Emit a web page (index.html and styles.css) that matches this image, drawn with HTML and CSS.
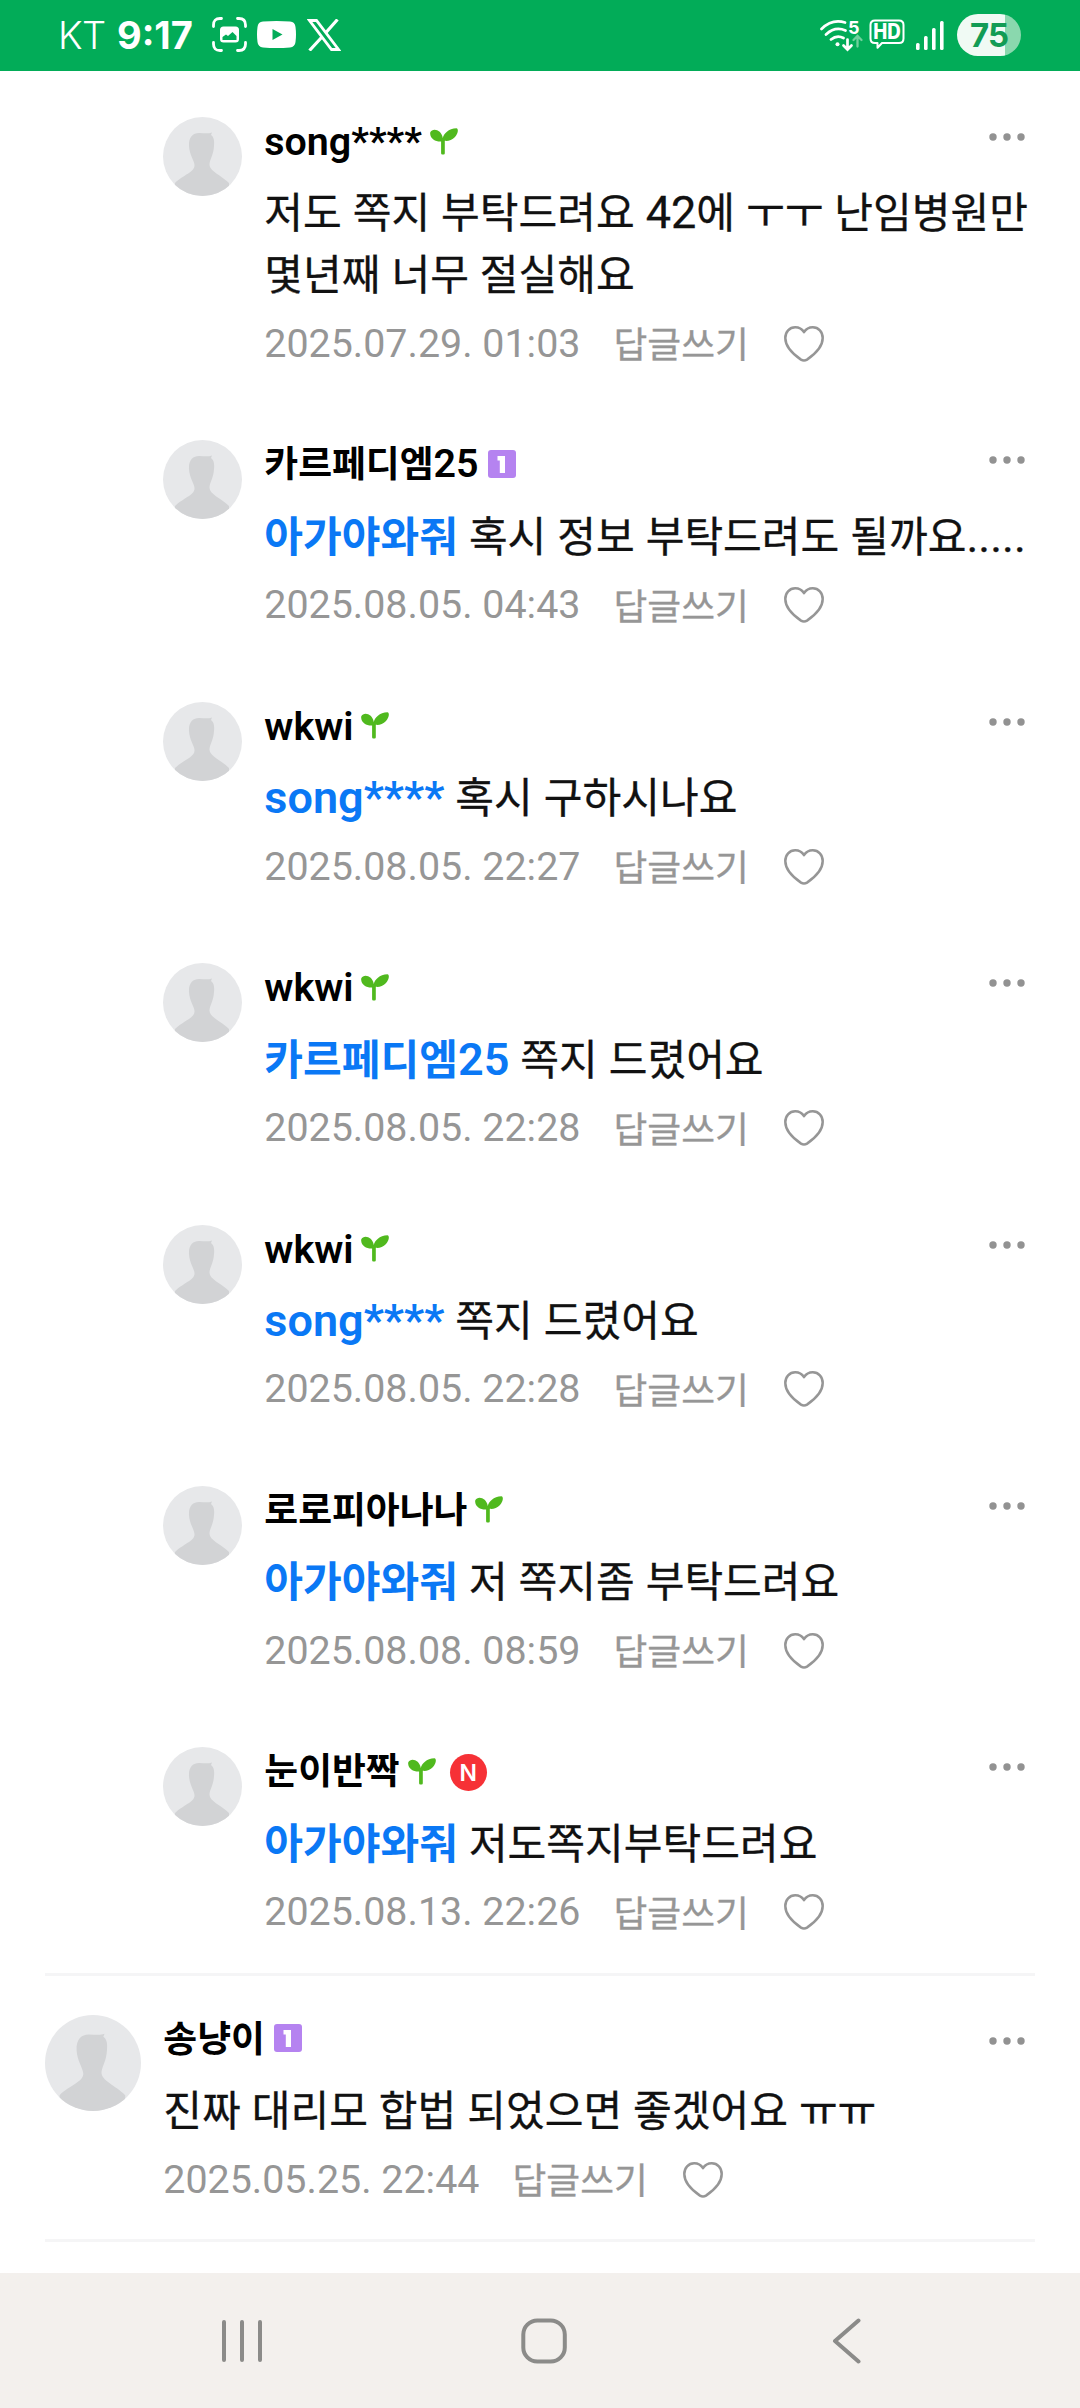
FILE: index.html
```html
<!DOCTYPE html>
<html lang="ko">
<head>
<meta charset="utf-8">
<title>댓글</title>
<link rel="stylesheet" href="styles.css">
</head>
<body>
<svg class="defs" width="0" height="0" aria-hidden="true">
  <symbol id="avatar" viewBox="0 0 79 79">
    <clipPath id="round"><circle cx="39.5" cy="39.5" r="39.5"/></clipPath>
    <circle cx="39.5" cy="39.5" r="39.5" fill="#e7e8ea"/>
    <path clip-path="url(#round)" fill="#d2d3d5" d="M26 29C25.500 20 30 16 36 16C41 16 45 17 49 15.500L48 18C51 20 51.500 24 51 29C50.500 38 47 42 46.500 47C46 54 58 58 66 66V79H12V66C20 58 32 55 31.500 48C31 43 26.500 38 26 29Z"/>
  </symbol>
  <symbol id="sprout" viewBox="0 0 28 27">
    <path fill="#50b91e" d="M.2 4.500C2.500-.5 11.500 1.500 12.800 10C13.500 6 18.500.5 26.500.3C28.500.5 28.500 5 25 9C22 12.500 17.500 13.300 14.800 12.800V25.300Q14.800 26.500 13.600 26.500H12.300Q11.100 26.500 11.100 25.300V13.500C6 14-.5 10.500.2 4.500Z"/>
  </symbol>
  <symbol id="level" viewBox="0 0 28 28">
    <rect width="28" height="28" rx="3" fill="#b583f0"/>
    <path fill="#fff" d="M9.500 6H17V23H11.800V10.500H9.500Z"/>
  </symbol>
  <symbol id="heart" viewBox="0 0 40 36">
    <path fill="none" stroke="#969696" stroke-width="2.500" stroke-linejoin="round" d="M20 6.200C17.800 2.600 14.500 1.300 11.200 1.300C5.500 1.300 1.300 5.800 1.300 12C1.300 21.500 9.500 28.500 17 33.600Q20 35.500 23 33.600C30.500 28.500 38.700 21.500 38.700 12C38.700 5.800 34.500 1.300 28.800 1.300C25.500 1.300 22.200 2.600 20 6.200Z"/>
  </symbol>
  <symbol id="more" viewBox="0 0 36 8">
    <g fill="#929292"><circle cx="4" cy="4" r="3.700"/><circle cx="18" cy="4" r="3.700"/><circle cx="32" cy="4" r="3.700"/></g>
  </symbol>
</svg>

<header class="status">
  <span class="carrier">KT</span>
  <span class="clock">9:17</span>
  <svg class="i-shot" width="35" height="35" viewBox="0 0 35 35" fill="none" stroke="#fff" stroke-width="2.800" stroke-linecap="round">
    <path d="M1.500 9.500V8Q1.500 1.500 8 1.500H9.500M25.500 1.500H27Q33.500 1.500 33.500 8V9.500M33.500 25.500V27Q33.500 33.500 27 33.500H25.500M9.500 33.500H8Q1.500 33.500 1.500 27V25.500"/>
    <rect x="8" y="9.500" width="19" height="16" rx="3.500" fill="#fff" stroke="none"/>
    <path d="M10.500 23V20L14 17.500L16 19L20.500 15L24.500 19V23Z" fill="#02ac58" stroke="none"/>
  </svg>
  <svg class="i-tube" width="39" height="27" viewBox="0 0 39 27">
    <path fill="#fff" d="M6 .6Q19.500-.6 33 .6Q38 1 38.500 6Q39.500 13.500 38.500 21Q38 26 33 26.400Q19.500 27.600 6 26.400Q1 26 .5 21Q-.5 13.500.5 6Q1 1 6 .6Z"/>
    <path fill="#02ac58" d="M15.500 8L25.500 13.500L15.500 19Z"/>
  </svg>
  <svg class="i-x" width="34" height="32" viewBox="0 0 34 32" fill="none" stroke="#fff">
    <path stroke-width="2.800" d="M2.500 1.500H9.500L31.500 30.500H24.500Z"/>
    <path stroke-width="3.200" d="M30.500.5L19 13.500M14.500 18.500L2.500 31.500"/>
  </svg>
  <span class="spacer"></span>
  <svg class="i-wifi" width="44" height="34" viewBox="0 0 44 34" fill="none" stroke="#fff" stroke-width="2.700" stroke-linecap="round">
    <path d="M1.500 11Q12 .5 25 4.500M6 16.500Q15 8 25.500 12.500M11 21.500Q17 16.500 23.500 20"/>
    <circle cx="17.500" cy="26.300" r="2" fill="#fff" stroke="none"/>
    <path d="M27.500 21.500V31M23.500 27.500L27.500 31.500L31.500 27.500"/>
    <path stroke="#70d09c" stroke-width="2.300" d="M37.500 28.500V18.500M33.500 22L37.500 18L41.500 22"/>
    <text class="wifi-gen" x="28" y="15.500">5</text>
  </svg>
  <svg class="i-hd" width="36" height="31" viewBox="0 0 36 31" fill="none" stroke="#fff" stroke-width="2">
    <path stroke-linejoin="round" d="M6 1.500H30Q34.500 1.500 34.500 6V19.500Q34.500 24 30 24H13L8.500 28.800V24H6Q1.500 24 1.500 19.500V6Q1.500 1.500 6 1.500Z"/>
    <text class="hd-text" x="4.300" y="20" textLength="27.500" lengthAdjust="spacingAndGlyphs">HD</text>
  </svg>
  <svg class="i-signal" width="28" height="30" viewBox="0 0 28 30" fill="#fff">
    <rect x="0" y="23" width="3.600" height="7" rx="1.500"/><rect x="8" y="16" width="3.600" height="14" rx="1.500"/><rect x="16" y="8" width="3.600" height="22" rx="1.500"/><rect x="24" y="1" width="3.600" height="29" rx="1.500"/>
  </svg>
  <span class="battery">75</span>
</header>

<main class="comments">
  <article class="comment reply">
    <svg class="avatar"><use href="#avatar"/></svg>
    <div class="content">
      <div class="head"><span class="name latin">song****</span><svg class="sprout"><use href="#sprout"/></svg><svg class="more"><use href="#more"/></svg></div>
      <p class="body">저도 쪽지 부탁드려요 <span class="num">42</span>에 ㅜㅜ 난임병원만<br>몇년째 너무 절실해요</p>
      <div class="meta"><time>2025.07.29. 01:03</time><span class="answer">답글쓰기</span><svg class="heart"><use href="#heart"/></svg></div>
    </div>
  </article>

  <article class="comment reply">
    <svg class="avatar"><use href="#avatar"/></svg>
    <div class="content">
      <div class="head"><span class="name">카르페디엠<span class="num">25</span></span><svg class="level"><use href="#level"/></svg><svg class="more"><use href="#more"/></svg></div>
      <p class="body"><b class="mention">아가야와줘</b> 혹시 정보 부탁드려도 될까요<span class="num">.....</span></p>
      <div class="meta"><time>2025.08.05. 04:43</time><span class="answer">답글쓰기</span><svg class="heart"><use href="#heart"/></svg></div>
    </div>
  </article>

  <article class="comment reply">
    <svg class="avatar"><use href="#avatar"/></svg>
    <div class="content">
      <div class="head"><span class="name latin">wkwi</span><svg class="sprout"><use href="#sprout"/></svg><svg class="more"><use href="#more"/></svg></div>
      <p class="body"><b class="mention num">song****</b> 혹시 구하시나요</p>
      <div class="meta"><time>2025.08.05. 22:27</time><span class="answer">답글쓰기</span><svg class="heart"><use href="#heart"/></svg></div>
    </div>
  </article>

  <article class="comment reply">
    <svg class="avatar"><use href="#avatar"/></svg>
    <div class="content">
      <div class="head"><span class="name latin">wkwi</span><svg class="sprout"><use href="#sprout"/></svg><svg class="more"><use href="#more"/></svg></div>
      <p class="body"><b class="mention">카르페디엠<span class="num">25</span></b> 쪽지 드렸어요</p>
      <div class="meta"><time>2025.08.05. 22:28</time><span class="answer">답글쓰기</span><svg class="heart"><use href="#heart"/></svg></div>
    </div>
  </article>

  <article class="comment reply">
    <svg class="avatar"><use href="#avatar"/></svg>
    <div class="content">
      <div class="head"><span class="name latin">wkwi</span><svg class="sprout"><use href="#sprout"/></svg><svg class="more"><use href="#more"/></svg></div>
      <p class="body"><b class="mention num">song****</b> 쪽지 드렸어요</p>
      <div class="meta"><time>2025.08.05. 22:28</time><span class="answer">답글쓰기</span><svg class="heart"><use href="#heart"/></svg></div>
    </div>
  </article>

  <article class="comment reply">
    <svg class="avatar"><use href="#avatar"/></svg>
    <div class="content">
      <div class="head"><span class="name">로로피아나나</span><svg class="sprout"><use href="#sprout"/></svg><svg class="more"><use href="#more"/></svg></div>
      <p class="body"><b class="mention">아가야와줘</b> 저 쪽지좀 부탁드려요</p>
      <div class="meta"><time>2025.08.08. 08:59</time><span class="answer">답글쓰기</span><svg class="heart"><use href="#heart"/></svg></div>
    </div>
  </article>

  <article class="comment reply">
    <svg class="avatar"><use href="#avatar"/></svg>
    <div class="content">
      <div class="head"><span class="name">눈이반짝</span><svg class="sprout"><use href="#sprout"/></svg><span class="new">N</span><svg class="more"><use href="#more"/></svg></div>
      <p class="body"><b class="mention">아가야와줘</b> 저도쪽지부탁드려요</p>
      <div class="meta"><time>2025.08.13. 22:26</time><span class="answer">답글쓰기</span><svg class="heart"><use href="#heart"/></svg></div>
    </div>
  </article>

  <article class="comment top-level">
    <svg class="avatar large"><use href="#avatar"/></svg>
    <div class="content">
      <div class="head"><span class="name">송냥이</span><svg class="level"><use href="#level"/></svg><svg class="more"><use href="#more"/></svg></div>
      <p class="body">진짜 대리모 합법 되었으면 좋겠어요 ㅠㅠ</p>
      <div class="meta"><time>2025.05.25. 22:44</time><span class="answer">답글쓰기</span><svg class="heart"><use href="#heart"/></svg></div>
    </div>
  </article>
</main>

<nav class="navbar">
  <svg width="40" height="44" viewBox="0 0 40 44" stroke="#8b8b89" stroke-width="4" stroke-linecap="round"><path d="M2 3V41M20 3V41M38 3V41"/></svg>
  <svg class="home" width="46" height="46" viewBox="0 0 46 46" fill="none" stroke="#8b8b89" stroke-width="4"><rect x="2.300" y="2.500" width="41.500" height="41" rx="14"/></svg>
  <svg width="30" height="46" viewBox="0 0 30 46" fill="none" stroke="#8b8b89" stroke-width="4" stroke-linecap="round" stroke-linejoin="round"><path d="M26.500 2.500L3 23L26.500 43.500"/></svg>
</nav>
</body>
</html>
```

FILE: styles.css
```css
* { box-sizing: border-box; }

body {
  margin: 0;
  height: 2408px;
  display: flex;
  flex-direction: column;
  overflow: hidden;
  background: #fff;
  color: #111;
  font-family: Roboto, "Noto Sans CJK KR", sans-serif;
}

svg { display: block; flex: none; }
.defs { position: absolute; }

/* status bar */
.status {
  flex: none;
  height: 71px;
  display: flex;
  align-items: center;
  padding: 0 59px 2px 58px;
  background: #02ac58;
  color: #fff;
  font-family: Inter, Roboto, sans-serif;
  font-size: 38px;
}
.carrier { font-weight: 300; width: 59px; letter-spacing: -0.5px; }
.clock { font-weight: 700; width: 95px; letter-spacing: 0; }
.i-tube { margin-left: 10px; }
.i-x { margin-left: 11px; }
.spacer { flex: 1; }
.i-hd { margin-left: 5px; }
.i-signal { margin-left: 11px; }
.wifi-gen { fill: #fff; stroke: none; font: 700 18px Inter, sans-serif; }
.hd-text { fill: #fff; stroke: none; font: 800 21px Inter, sans-serif; }
.battery {
  width: 64px;
  height: 42px;
  margin-left: 13px;
  border-radius: 21px;
  background: linear-gradient(90deg, #f0faf4 48px, #8ad8ae 48px);
  color: #129c55;
  font-size: 33px;
  font-weight: 700;
  line-height: 42px;
  text-align: center;
  letter-spacing: -1px;
}

/* comment list */
.comments { flex: 1; padding: 46px 45px 0; }
.comment { display: flex; padding-bottom: 34px; }
.reply { padding-left: 118px; margin-bottom: 39px; }
.top-level {
  padding-top: 39px;
  padding-bottom: 36px;
  border-top: 3px solid #f5f5f6;
  border-bottom: 3px solid #f5f5f6;
}
.reply:has(+ .top-level) { margin-bottom: 3px; }
.avatar { width: 79px; height: 79px; }
.avatar.large { width: 96px; height: 96px; }
.content { flex: 1; margin-left: 22.300px; padding-top: 1px; }

.head { display: flex; align-items: center; height: 48px; }
.name { color: #000; font-size: 36.800px; font-weight: 600; line-height: 48px; white-space: nowrap; }
.name.latin { font-size: 39.400px; }
.name .num { font-size: 39.400px; line-height: 1; }
.sprout { width: 28px; height: 27px; margin: 0 0 2px 8px; }
.level { width: 28px; height: 28px; margin: 0 0 3px 9px; }
.new {
  width: 37px;
  height: 37px;
  margin-left: 14px;
  border-radius: 50%;
  background: #f63136;
  color: #fff;
  font: 600 23px/38px Inter, sans-serif;
  text-align: center;
}
.more { width: 36px; height: 8px; margin: -10px 10px 0 auto; }
.top-level .more { margin-top: 3px; }

.body {
  margin: 17.400px 0 0;
  font-size: 42.100px;
  line-height: 62px;
  word-spacing: 0.500px;
  white-space: nowrap;
  -webkit-text-stroke: 0.300px currentColor;
}
.body .num { font-size: 45px; line-height: 1; }
.mention { color: #0a78f5; font-weight: 600; -webkit-text-stroke: 0; }

.meta { display: flex; align-items: center; height: 48px; margin-top: 12px; color: #969696; font-size: 39.400px; }
.answer { margin: -2px 0 0 33px; font-size: 36.800px; -webkit-text-stroke: 0.300px currentColor; }
.heart { width: 40px; height: 36px; margin: 1px 0 0 35.500px; }

/* system navigation */
.navbar {
  flex: none;
  height: 135px;
  display: flex;
  align-items: center;
  justify-content: space-between;
  padding: 0 218px 0 222px;
  background: #f3f0ed;
}
.home { margin-right: 6px; }
```
